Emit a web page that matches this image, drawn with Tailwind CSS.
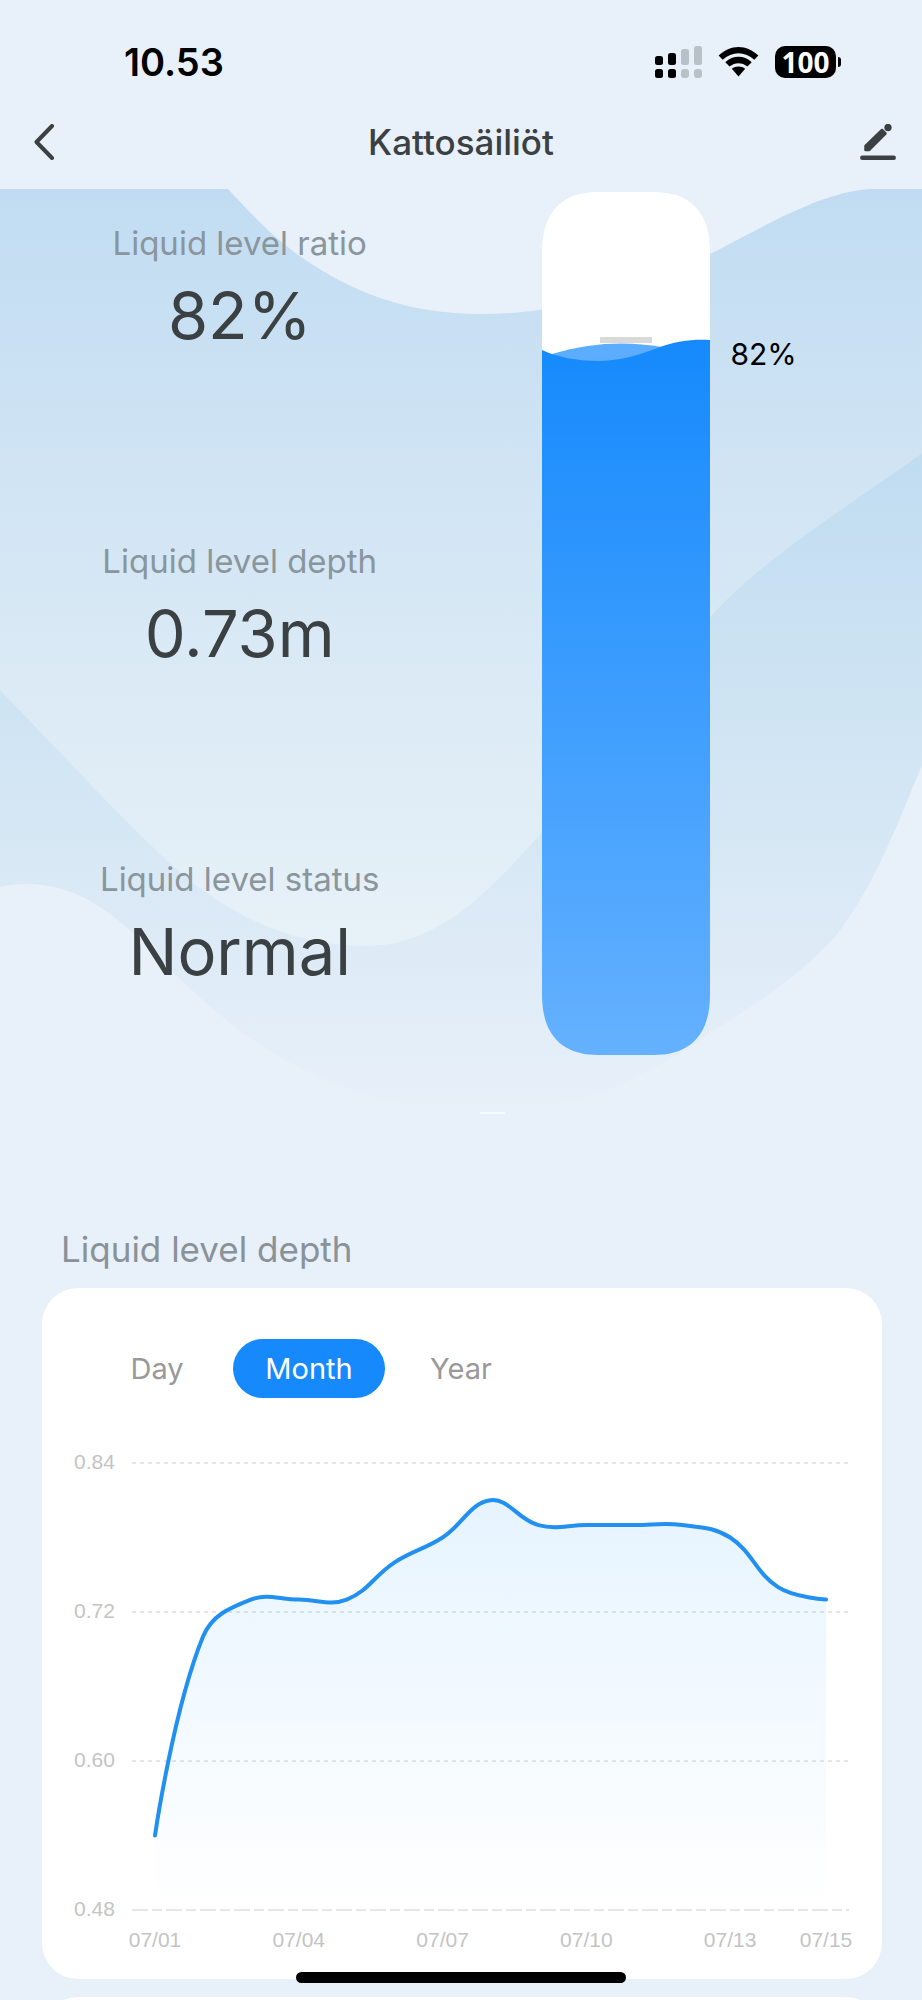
<!DOCTYPE html>
<html lang="en">
<head>
  <meta charset="UTF-8" />
  <meta name="viewport" content="width=device-width, initial-scale=1.0" />
  <title>Kattosäiliöt</title>
  <script src="https://cdn.jsdelivr.net/npm/@tailwindcss/browser@4"></script>
</head>
<body class="relative h-screen overflow-hidden bg-[#e8f0fa] font-['Inter','Liberation_Sans',sans-serif] text-[#3b4043]">
  <!-- Status bar -->
  <div class="flex h-[100px] items-center justify-between pt-6 pr-[81px] pl-[124px] text-black">
    <span class="text-[38px] leading-[44px] font-semibold">10.53</span>
    <div class="flex items-center">
      <svg class="h-8 w-[47px]" viewBox="0 0 47 32" aria-hidden="true">
        <g fill="#000">
          <rect x="0" y="10" width="8" height="9" rx="2.5" /><rect x="13" y="7" width="8" height="12" rx="2.5" />
          <rect x="0" y="23" width="8" height="9" rx="2.5" /><rect x="13" y="23" width="8" height="9" rx="2.5" />
        </g>
        <g fill="#b8c1c7">
          <rect x="26" y="3" width="8" height="16" rx="2.5" /><rect x="39" y="0" width="8" height="19" rx="2.5" />
          <rect x="26" y="23" width="8" height="9" rx="3" /><rect x="39" y="23" width="8" height="9" rx="3" />
        </g>
      </svg>
      <svg class="ml-4 h-8 w-[41px]" viewBox="0 0 41 32" aria-hidden="true">
        <path d="M0.6 9.6C12-2 29-2 40.4 9.6L36.3 13.7C27.3 5 13.7 5 4.7 13.7Z" />
        <path d="M7.3 16.2C15 9 26 9 33.7 16.2L29.4 20.5C24.3 16 16.7 16 11.6 20.5Z" />
        <path d="M13.8 22.8C17.6 19.6 23.4 19.6 27.2 22.8L20.5 30.5Z" />
      </svg>
      <div class="ml-4 flex h-8 w-[61px] items-center justify-center rounded-[10px] bg-black font-['Noto_Sans',sans-serif] text-[28px] leading-8 font-bold text-white">100</div>
      <div class="ml-0.5 h-[10px] w-[3px] rounded-r-full bg-black"></div>
    </div>
  </div>

  <!-- Title bar -->
  <header class="flex h-[89px] items-center justify-between pr-[26px] pb-1.5 pl-8">
    <button aria-label="Back" class="flex w-[30px]">
      <svg class="h-9 w-6" viewBox="0 0 24 36" fill="none" stroke="#3b4043" stroke-width="4" stroke-linecap="round" stroke-linejoin="round"><path d="M20 2L4.5 18L20 34" /></svg>
    </button>
    <h1 class="text-[35px] leading-[44px] font-medium">Kattosäiliöt</h1>
    <button aria-label="Edit" class="flex w-9">
      <svg class="h-9 w-9" viewBox="0 0 36 36" fill="#3b4043" stroke="#3b4043" stroke-linecap="round" stroke-linejoin="round">
        <path d="M2.3 33.7H33.7" stroke-width="4.5" />
        <path d="M5.5 22L22 6L25.5 9.5L9 26H5.500Z" stroke-width="2.500" />
        <circle cx="28" cy="3.5" r="3.7" stroke="none" />
      </svg>
    </button>
  </header>

  <!-- Tank level -->
  <section class="relative flex">
    <svg class="absolute inset-0 h-full w-full" viewBox="0 189 922 954" preserveAspectRatio="none" aria-hidden="true">
      <defs>
        <linearGradient id="back" gradientUnits="userSpaceOnUse" x1="0" y1="189" x2="0" y2="946">
          <stop offset="0" stop-color="#c1dcf2" /><stop offset="0.6" stop-color="#d9e9f5" /><stop offset="1" stop-color="#e7f1f8" />
        </linearGradient>
        <linearGradient id="front" gradientUnits="userSpaceOnUse" x1="0" y1="453" x2="0" y2="1112">
          <stop offset="0" stop-color="#c0dcf1" /><stop offset="0.55" stop-color="#d5e7f4" /><stop offset="1" stop-color="#e8f0fa" />
        </linearGradient>
      </defs>
      <path fill="url(#back)" d="M0 189H228C245 207 265 230 294 252C350 292 405 314 482 314C560 314 630 292 710 254C764 227 820 192 870 189H922V453C850 505 760 560 710 617C650 690 600 775 542 832C490 890 440 946 365 946C270 946 200 893 159 853C100 797 45 735 0 690Z" />
      <path fill="url(#front)" d="M922 453C850 505 760 560 710 617C650 690 600 775 542 832C490 890 440 946 365 946C270 946 200 893 159 853C100 797 45 735 0 690V887C40 878 75 890 100 907C150 940 170 980 253 1040C330 1090 400 1112 480 1112C580 1112 650 1075 710 1033C760 1002 800 975 835 937C875 885 895 830 922 765Z" />
      <path d="M480 1113H505" stroke="#f6faff" stroke-width="2" />
    </svg>

    <dl class="relative w-[52%] text-center">
      <div class="h-[318px] pt-[34px]">
        <dt class="text-[33px] leading-10 text-[#8a959c]">Liquid level ratio</dt>
        <dd class="mt-[13px] text-[65px] leading-[80px]">82%</dd>
      </div>
      <div class="h-[318px] pt-[34px]">
        <dt class="text-[33px] leading-10 text-[#8a959c]">Liquid level depth</dt>
        <dd class="mt-[13px] text-[65px] leading-[80px]">0.73m</dd>
      </div>
      <div class="h-[318px] pt-[34px]">
        <dt class="text-[33px] leading-10 text-[#8a959c]">Liquid level status</dt>
        <dd class="mt-[13px] text-[65px] leading-[80px]">Normal</dd>
      </div>
    </dl>

    <div class="relative ml-[63px] flex pt-[3px]">
      <svg class="h-[863px] w-[168px]" viewBox="0 0 168 863" role="img" aria-label="Tank 82% full">
        <defs>
          <clipPath id="tank"><path d="M0 60C0 20 20 0 56 0H112C148 0 168 20 168 60V803C168 843 148 863 112 863H56C20 863 0 843 0 803Z" /></clipPath>
          <linearGradient id="water" x1="0" y1="0" x2="0" y2="1">
            <stop offset="0" stop-color="#168afc" /><stop offset="1" stop-color="#64b1ff" />
          </linearGradient>
        </defs>
        <g clip-path="url(#tank)">
          <rect width="168" height="863" fill="#fff" />
          <rect x="58" y="145" width="52" height="6" fill="#d9d9d9" />
          <path fill="#5cacff" d="M10 162C50 150 85 149 120 155L110 175H20Z" />
          <path fill="url(#water)" d="M0 158C15 165 35 169 56 169C75 169 95 164 118 155C135 149 150 147 168 148V863H0Z" />
        </g>
      </svg>
      <span class="ml-[20px] pt-[142px] text-[30px] leading-10 text-black">82%</span>
    </div>
  </section>

  <!-- History -->
  <section class="mr-10 ml-[42px] pt-[84px]">
    <h2 class="pl-[19px] text-[35px] leading-[44px] text-[#8a9298]">Liquid level depth</h2>
    <div class="mt-[17px] rounded-[36px] bg-white pt-[51px]">
      <div class="flex pl-[39px] text-[29px] text-[#999]">
        <button class="h-[59px] w-[152px] rounded-full">Day</button>
        <button class="h-[59px] w-[152px] rounded-full bg-[#168afc] text-white">Month</button>
        <button class="h-[59px] w-[152px] rounded-full">Year</button>
      </div>
      <svg id="chart" class="mt-10 block w-full font-['Liberation_Sans',sans-serif] text-[21px]" viewBox="0 0 840 541" role="img" aria-label="Liquid level depth by day"></svg>
    </div>
    <div class="mt-[18px] h-20 rounded-t-[36px] bg-white"></div>
  </section>

  <!-- Home indicator -->
  <div class="absolute inset-x-0 bottom-[17px] mx-auto h-[11px] w-[330px] rounded-full bg-black"></div>

  <script>
  const depths = [0.54, 0.70, 0.73, 0.73, 0.73, 0.76, 0.78, 0.81, 0.79, 0.79, 0.79, 0.79, 0.78, 0.74, 0.73];
  const labels = { 0: '07/01', 3: '07/04', 6: '07/07', 9: '07/10', 12: '07/13', 14: '07/15' };
  const bottom = 472;
  const xOf = i => 113 + i * (671 / 14);
  const yOf = v => bottom - (v - 0.48) * (447 / 0.36);
  const pts = depths.map((v, i) => [xOf(i), yOf(v)]);
  const dist = (a, b) => Math.hypot(a[0] - b[0], a[1] - b[1]);

  // control points before and after each point
  const ctrl = pts.map((p, i) => {
    const prev = pts[i - 1], next = pts[i + 1];
    if (!prev || !next) return [p, p];
    const r = dist(p, next) / (dist(p, next) + dist(p, prev));
    const dx = (next[0] - prev[0]) * 0.4, dy = (next[1] - prev[1]) * 0.4;
    return [[p[0] - dx * (1 - r), p[1] - dy * (1 - r)], [p[0] + dx * r, p[1] + dy * r]];
  });
  let line = `M${pts[0]}`;
  for (let i = 1; i < pts.length; i++) {
    line += `C${ctrl[i - 1][1]} ${ctrl[i][0]} ${pts[i]}`;
  }

  const grid = [0.84, 0.72, 0.60, 0.48].map(v => `
    <text x="32" y="${yOf(v) + 6}" fill="#c4c4c4">${v.toFixed(2)}</text>
    <path d="M90 ${yOf(v)}H807" stroke="#e6e6e6" stroke-width="2" stroke-dasharray="${v === 0.48 ? '16 4 10 4' : '4 4'}" />`).join('');
  const days = Object.keys(labels).map(i => `
    <text x="${xOf(+i)}" y="509" text-anchor="middle" fill="#c4c4c4">${labels[i]}</text>`).join('');

  document.getElementById('chart').innerHTML = `
    <defs>
      <linearGradient id="area" x1="0" y1="0" x2="0" y2="1">
        <stop offset="0" stop-color="#1e9bff" stop-opacity="0.11" />
        <stop offset="1" stop-color="#1e9bff" stop-opacity="0" />
      </linearGradient>
    </defs>
    ${grid}
    <path d="${line}V${bottom}H${xOf(0)}Z" fill="url(#area)" />
    <path d="${line}" fill="none" stroke="#2190f0" stroke-width="4" stroke-linecap="round" stroke-linejoin="round" />
    ${days}`;
  </script>
</body>
</html>
